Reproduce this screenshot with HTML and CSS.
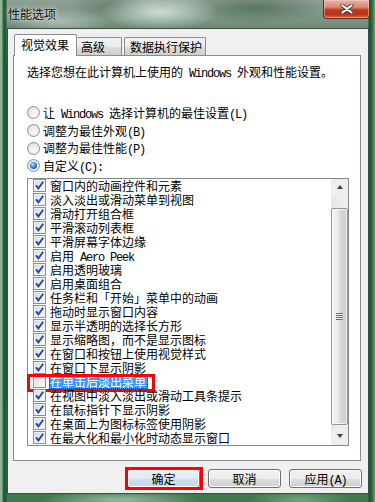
FILE: index.html
```html
<!DOCTYPE html>
<html lang="zh-CN">
<head>
<meta charset="utf-8">
<title>性能选项</title>
<link rel="stylesheet" href="styles.css">
</head>
<body>
<div class="window">
  <div class="titlebar">
    <span class="title">性能选项</span>
    <div class="close">
      <svg width="14" height="10" viewBox="0 0 14 10"><path d="M2.5 1.5 L11.5 8.5 M11.5 1.5 L2.5 8.5" stroke="#4a3a38" stroke-width="4" stroke-linecap="round"/><path d="M2.5 1.5 L11.5 8.5 M11.5 1.5 L2.5 8.5" stroke="#ffffff" stroke-width="2.2" stroke-linecap="round"/></svg>
    </div>
  </div>
  <div class="client">
    <div class="tabs">
      <div class="tab active">视觉效果</div>
      <div class="tab t2">高级</div>
      <div class="tab t3">数据执行保护</div>
    </div>
    <div class="panel">
      <p class="intro">选择您想在此计算机上使用的<span class="lat"> Windows </span>外观和性能设置。</p>
      <div class="radios">
        <div class="radio"><span class="rb"></span><span class="t">让<span class="lat"> Windows </span>选择计算机的最佳设置<span class="lat">(L)</span></span></div>
        <div class="radio"><span class="rb"></span><span class="t">调整为最佳外观<span class="lat">(B)</span></span></div>
        <div class="radio"><span class="rb"></span><span class="t">调整为最佳性能<span class="lat">(P)</span></span></div>
        <div class="radio"><span class="rb on"></span><span class="t">自定义<span class="lat">(C):</span></span></div>
      </div>
      <div class="list">
        <div class="rows">
          <div class="row"><span class="cb"><svg width="13" height="13" viewBox="0 0 13 13"><path d="M3 6.3 L5.4 9.4 L10.2 2.8" fill="none" stroke="#2b46a0" stroke-width="1.9"/></svg></span><span class="t">窗口内的动画控件和元素</span></div>
          <div class="row"><span class="cb"><svg width="13" height="13" viewBox="0 0 13 13"><path d="M3 6.3 L5.4 9.4 L10.2 2.8" fill="none" stroke="#2b46a0" stroke-width="1.9"/></svg></span><span class="t">淡入淡出或滑动菜单到视图</span></div>
          <div class="row"><span class="cb"><svg width="13" height="13" viewBox="0 0 13 13"><path d="M3 6.3 L5.4 9.4 L10.2 2.8" fill="none" stroke="#2b46a0" stroke-width="1.9"/></svg></span><span class="t">滑动打开组合框</span></div>
          <div class="row"><span class="cb"><svg width="13" height="13" viewBox="0 0 13 13"><path d="M3 6.3 L5.4 9.4 L10.2 2.8" fill="none" stroke="#2b46a0" stroke-width="1.9"/></svg></span><span class="t">平滑滚动列表框</span></div>
          <div class="row"><span class="cb"><svg width="13" height="13" viewBox="0 0 13 13"><path d="M3 6.3 L5.4 9.4 L10.2 2.8" fill="none" stroke="#2b46a0" stroke-width="1.9"/></svg></span><span class="t">平滑屏幕字体边缘</span></div>
          <div class="row"><span class="cb"><svg width="13" height="13" viewBox="0 0 13 13"><path d="M3 6.3 L5.4 9.4 L10.2 2.8" fill="none" stroke="#2b46a0" stroke-width="1.9"/></svg></span><span class="t">启用<span class="lat"> Aero Peek</span></span></div>
          <div class="row"><span class="cb"><svg width="13" height="13" viewBox="0 0 13 13"><path d="M3 6.3 L5.4 9.4 L10.2 2.8" fill="none" stroke="#2b46a0" stroke-width="1.9"/></svg></span><span class="t">启用透明玻璃</span></div>
          <div class="row"><span class="cb"><svg width="13" height="13" viewBox="0 0 13 13"><path d="M3 6.3 L5.4 9.4 L10.2 2.8" fill="none" stroke="#2b46a0" stroke-width="1.9"/></svg></span><span class="t">启用桌面组合</span></div>
          <div class="row"><span class="cb"><svg width="13" height="13" viewBox="0 0 13 13"><path d="M3 6.3 L5.4 9.4 L10.2 2.8" fill="none" stroke="#2b46a0" stroke-width="1.9"/></svg></span><span class="t">任务栏和「开始」菜单中的动画</span></div>
          <div class="row"><span class="cb"><svg width="13" height="13" viewBox="0 0 13 13"><path d="M3 6.3 L5.4 9.4 L10.2 2.8" fill="none" stroke="#2b46a0" stroke-width="1.9"/></svg></span><span class="t">拖动时显示窗口内容</span></div>
          <div class="row"><span class="cb"><svg width="13" height="13" viewBox="0 0 13 13"><path d="M3 6.3 L5.4 9.4 L10.2 2.8" fill="none" stroke="#2b46a0" stroke-width="1.9"/></svg></span><span class="t">显示半透明的选择长方形</span></div>
          <div class="row"><span class="cb"><svg width="13" height="13" viewBox="0 0 13 13"><path d="M3 6.3 L5.4 9.4 L10.2 2.8" fill="none" stroke="#2b46a0" stroke-width="1.9"/></svg></span><span class="t">显示缩略图，而不是显示图标</span></div>
          <div class="row"><span class="cb"><svg width="13" height="13" viewBox="0 0 13 13"><path d="M3 6.3 L5.4 9.4 L10.2 2.8" fill="none" stroke="#2b46a0" stroke-width="1.9"/></svg></span><span class="t">在窗口和按钮上使用视觉样式</span></div>
          <div class="row"><span class="cb"><svg width="13" height="13" viewBox="0 0 13 13"><path d="M3 6.3 L5.4 9.4 L10.2 2.8" fill="none" stroke="#2b46a0" stroke-width="1.9"/></svg></span><span class="t">在窗口下显示阴影</span></div>
          <div class="row"><span class="cb"></span><span class="t sel">在单击后淡出菜单</span><span class="redbox"></span></div>
          <div class="row"><span class="cb"><svg width="13" height="13" viewBox="0 0 13 13"><path d="M3 6.3 L5.4 9.4 L10.2 2.8" fill="none" stroke="#2b46a0" stroke-width="1.9"/></svg></span><span class="t">在视图中淡入淡出或滑动工具条提示</span></div>
          <div class="row"><span class="cb"><svg width="13" height="13" viewBox="0 0 13 13"><path d="M3 6.3 L5.4 9.4 L10.2 2.8" fill="none" stroke="#2b46a0" stroke-width="1.9"/></svg></span><span class="t">在鼠标指针下显示阴影</span></div>
          <div class="row"><span class="cb"><svg width="13" height="13" viewBox="0 0 13 13"><path d="M3 6.3 L5.4 9.4 L10.2 2.8" fill="none" stroke="#2b46a0" stroke-width="1.9"/></svg></span><span class="t">在桌面上为图标标签使用阴影</span></div>
          <div class="row"><span class="cb"><svg width="13" height="13" viewBox="0 0 13 13"><path d="M3 6.3 L5.4 9.4 L10.2 2.8" fill="none" stroke="#2b46a0" stroke-width="1.9"/></svg></span><span class="t">在最大化和最小化时动态显示窗口</span></div>
        </div>
        <div class="scroll">
          <div class="arrow"><span class="tri up"></span></div>
          <div class="gap-top"></div>
          <div class="thumb"><span class="grip"></span></div>
          <div class="gap-bot"></div>
          <div class="arrow"><span class="tri down"></span></div>
        </div>
      </div>
    </div>
    <div class="buttons">
      <div class="btn default">确定<span class="redbox2"></span></div>
      <div class="btn">取消</div>
      <div class="btn">应用<span class="lat">(A)</span></div>
    </div>
  </div>
</div>
</body>
</html>
```

FILE: styles.css
```css
* { box-sizing: border-box; }
html, body { margin: 0; padding: 0; }
body {
  width: 375px;
  height: 502px;
  overflow: hidden;
  font-family: "Noto Sans CJK SC", "Noto Sans", sans-serif;
  font-size: 12px;
  color: #000;
}
.lat {
  font-family: "Liberation Mono", monospace;
  letter-spacing: -1.2px;
}
.window {
  width: 375px;
  height: 502px;
  display: flex;
  flex-direction: column;
  padding: 0 6px 8px 7px;
  background:
    radial-gradient(ellipse 60px 18px at 160px 12px, rgba(215,232,222,0.85), rgba(215,232,222,0) 100%),
    radial-gradient(ellipse 50px 14px at 60px 22px, rgba(190,205,195,0.7), rgba(190,205,195,0) 100%),
    radial-gradient(ellipse 70px 16px at 255px 8px, rgba(60,95,70,0.6), rgba(60,95,70,0) 100%),
    radial-gradient(ellipse 40px 14px at 110px 6px, rgba(70,105,80,0.5), rgba(70,105,80,0) 100%),
    radial-gradient(ellipse 80px 10px at 120px 500px, rgba(170,205,175,0.8), rgba(170,205,175,0) 100%),
    radial-gradient(ellipse 50px 10px at 300px 500px, rgba(150,195,160,0.6), rgba(150,195,160,0) 100%),
    linear-gradient(to right, #8fb598 0, #8fb598 2px, #2c643c 3px, #1f5431 6px, transparent 7px, transparent 368px, #1d4e2e 369px, #2b6a3e 372px, #6fa07b 375px),
    linear-gradient(to bottom, #8e9f93 0, #7c9384 20px, #6c8a74 28px, #3c6f4b 60px, #336a44 60%, #3f7a4f 100%);
}
.titlebar {
  height: 28px;
  flex: none;
  display: flex;
  align-items: flex-start;
  margin-left: 1px;
}
.title {
  margin-top: 6px;
  line-height: 16px;
  color: #111;
  text-shadow: 0 0 6px rgba(235,245,238,0.9), 0 0 3px rgba(235,245,238,0.8);
}
.close {
  margin-left: auto;
  margin-right: -1px;
  width: 47px;
  height: 19px;
  border: 1px solid #5b2a22;
  border-top: none;
  border-radius: 0 0 4px 4px;
  background: linear-gradient(to bottom, #eab2a6 0%, #d98a78 40%, #c1391d 55%, #b8331a 80%, #d86a45 100%);
  box-shadow: inset 0 0 0 1px rgba(255,220,210,0.45);
  display: flex;
  align-items: center;
  justify-content: center;
}
.client {
  flex: 1;
  background: #f0f0f0;
  border: 1px solid #3f4a44;
  padding-top: 5px;
  display: flex;
  flex-direction: column;
}
.tabs {
  height: 21px;
  display: flex;
  align-items: flex-end;
  padding-left: 6px;
  position: relative;
  z-index: 1;
}
.tab {
  height: 18px;
  border: 1px solid #898c95;
  border-bottom: none;
  border-radius: 2px 2px 0 0;
  background: linear-gradient(to bottom, #f3f3f3 0%, #ebebeb 50%, #dddddd 51%, #cfcfcf 100%);
  line-height: 17px;
  white-space: nowrap;
}
.tab.active {
  height: 22px;
  margin-bottom: -1px;
  background: #fff;
  width: 63px;
  padding-left: 6px;
  line-height: 20px;
}
.tab.t2 {
  width: 45px;
  padding-left: 4px;
  border-left: none;
}
.tab.t3 {
  width: 82px;
  padding-left: 5px;
  margin-left: 2px;
}
.panel {
  height: 406px;
  margin: 0 7px 0 5px;
  border: 1px solid #898c95;
  background: #fff;
  padding: 9px 11px 0 13px;
}
.intro {
  margin: 0;
  height: 14px;
  line-height: 14px;
  white-space: nowrap;
}
.radios {
  margin-top: 25.2px;
}
.radio {
  height: 17.6px;
  display: flex;
  align-items: center;
  white-space: nowrap;
}
.t {
  display: block;
  height: 14px;
  line-height: 14px;
  white-space: nowrap;
}
.rb {
  width: 13px;
  height: 13px;
  border-radius: 50%;
  border: 1px solid #8c8f94;
  background: radial-gradient(circle at 60% 65%, #fbfbfb 0, #eeeeee 45%, #cfd1d4 100%);
  margin-right: 3px;
  flex: none;
  display: flex;
  align-items: center;
  justify-content: center;
}
.rb.on::after {
  content: "";
  width: 7px;
  height: 7px;
  border-radius: 50%;
  background: radial-gradient(circle at 40% 35%, #c8ecff 0, #4aa0e6 35%, #165fb2 70%, #0b3f86 100%);
}
.list {
  margin-top: 3.4px;
  height: 268px;
  border: 1px solid #828790;
  display: flex;
}
.rows {
  flex: 1;
}
.row {
  height: 14px;
  display: flex;
  align-items: center;
  padding-left: 5px;
  position: relative;
}
.cb {
  width: 13px;
  height: 13px;
  flex: none;
  border: 1px solid #8e8f8f;
  background: linear-gradient(135deg, #d5d6d8 0%, #e9e9ea 45%, #fbfbfb 100%);
  box-shadow: inset 0 0 0 1px #f1f1f1;
  margin-right: 4px;
  display: flex;
}
.cb svg { margin: -1px; }
.sel {
  background: #3399ff;
  color: #fff;
  padding: 0 2px 0 1px;
  margin-left: -1px;
  outline: 1px dotted #0e3a76;
  outline-offset: -1px;
}
.redbox {
  position: absolute;
  left: -1px;
  top: -1px;
  width: 128px;
  height: 18px;
  border: 3px solid #ff0000;
}
.scroll {
  width: 17px;
  flex: none;
  display: flex;
  flex-direction: column;
  background: linear-gradient(to right, #e6e6e6, #f2f2f2);
}
.arrow {
  height: 17px;
  flex: none;
  display: flex;
  align-items: center;
  justify-content: center;
  background: #eeeeee;
}
.tri {
  width: 0;
  height: 0;
  border-left: 3.5px solid transparent;
  border-right: 3.5px solid transparent;
}
.tri.up { border-bottom: 4px solid #404040; }
.tri.down { border-top: 4px solid #404040; }
.gap-top { height: 12px; flex: none; }
.gap-bot { height: 3px; flex: none; }
.thumb {
  flex: 1;
  border: 1px solid #979797;
  border-radius: 2px;
  background: linear-gradient(to right, #f4f4f4 0%, #e8e8e8 45%, #d8d8d8 55%, #cdcdcd 100%);
  box-shadow: inset 0 0 0 1px rgba(255,255,255,0.6);
  display: flex;
  align-items: center;
  justify-content: center;
}
.grip {
  width: 7px;
  height: 7px;
  background: repeating-linear-gradient(to bottom, #6a6a6a 0, #6a6a6a 1px, #f2f2f2 1px, #f2f2f2 2px);
}
.buttons {
  display: flex;
  justify-content: flex-end;
  gap: 8px;
  margin-top: 8px;
  padding-right: 6px;
}
.btn {
  width: 73px;
  height: 19px;
  border: 1px solid #707070;
  border-radius: 3px;
  background: linear-gradient(to bottom, #f2f2f2 0%, #ebebeb 50%, #dddddd 51%, #cfcfcf 100%);
  box-shadow: inset 0 0 0 1px #fbfbfb;
  text-align: center;
  line-height: 17px;
  position: relative;
}
.btn.default {
  border-color: #3c7fb1;
  background: linear-gradient(to bottom, #e9f1f8 0%, #dfeaf4 50%, #cfe0ee 51%, #c2d7e8 100%);
}
.redbox2 {
  position: absolute;
  left: -3px;
  top: -3px;
  right: -4px;
  bottom: -3px;
  border: 3px solid #ff0000;
}
```
